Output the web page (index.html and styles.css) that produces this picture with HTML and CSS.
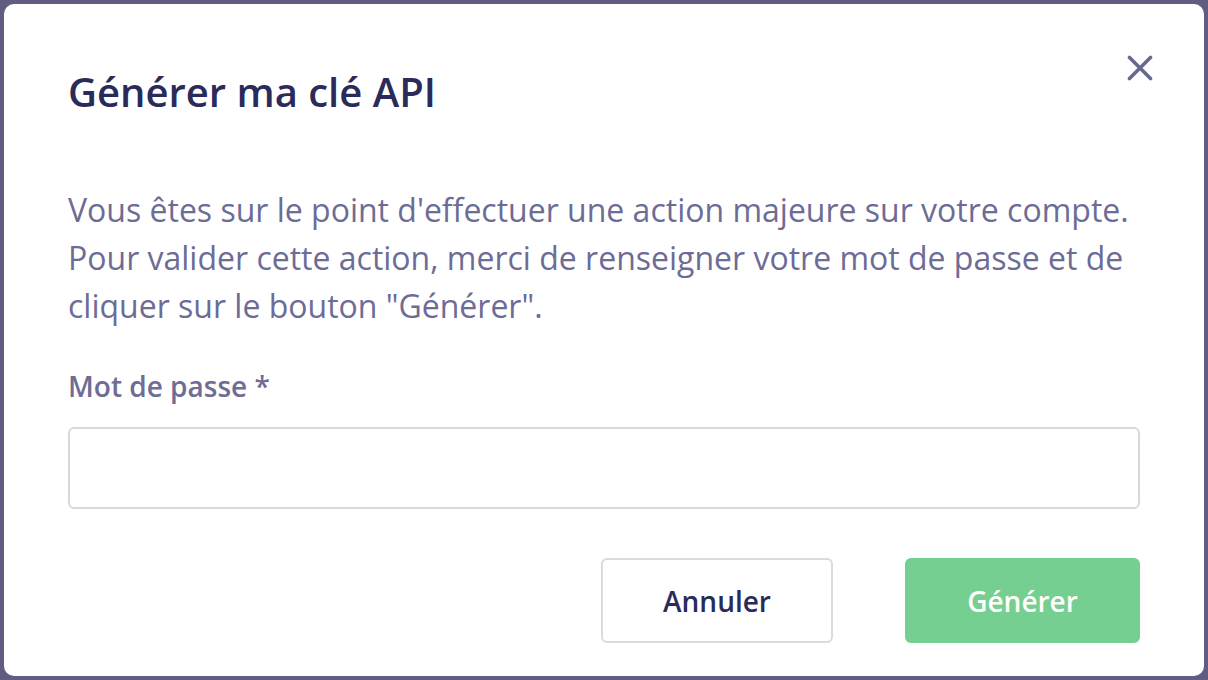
FILE: index.html
```html
<!DOCTYPE html>
<html lang="fr">
<head>
<meta charset="utf-8">
<title>Générer ma clé API</title>
<link rel="stylesheet" href="styles.css">
</head>
<body>
<div class="overlay">
  <div class="modal" role="dialog" aria-labelledby="modal-title">
    <div class="modal-header">
      <h1 id="modal-title" class="modal-title">Générer ma clé API</h1>
      <button class="close-btn" type="button" aria-label="Fermer">
        <svg width="26" height="26" viewBox="0 0 26 26" aria-hidden="true">
          <path d="M2.5 2.5 L23.5 23.5 M23.5 2.5 L2.5 23.5" stroke="currentColor" stroke-width="3.6" stroke-linecap="round" fill="none"/>
        </svg>
      </button>
    </div>
    <p class="modal-text">Vous êtes sur le point d'effectuer une action majeure sur votre compte. Pour valider cette action, merci de renseigner votre mot de passe et de cliquer sur le bouton "Générer".</p>
    <label class="field-label" for="password">Mot de passe *</label>
    <input class="field-input" id="password" type="password">
    <div class="modal-actions">
      <button class="btn btn-secondary" type="button">Annuler</button>
      <button class="btn btn-primary" type="button">Générer</button>
    </div>
  </div>
</div>
</body>
</html>
```

FILE: styles.css
```css
* {
  box-sizing: border-box;
}

html, body {
  margin: 0;
  padding: 0;
  height: 100%;
}

body {
  background: #5f5d81;
  font-family: "Open Sans", "Noto Sans", sans-serif;
}

.overlay {
  padding: 4px;
  height: 100%;
}

.modal {
  background: #ffffff;
  border-radius: 10px;
  height: 672px;
  padding: 48px 64px 33px 64px;
  display: flex;
  flex-direction: column;
}

.modal-header {
  display: flex;
  justify-content: space-between;
  align-items: flex-start;
}

.modal-title {
  margin: 15.5px 0 0 0;
  font-size: 40px;
  line-height: 48px;
  font-weight: 600;
  color: #2a2b5a;
}

.close-btn {
  width: 32px;
  height: 32px;
  margin-right: -16px;
  padding: 0;
  border: none;
  background: transparent;
  color: #67678f;
  display: flex;
  align-items: center;
  justify-content: center;
  cursor: pointer;
}

.modal-text {
  margin: 70px 0 0 0;
  font-size: 32px;
  line-height: 48px;
  font-weight: 400;
  color: #6c6c96;
}

.field-label {
  display: block;
  margin-top: 36.5px;
  font-size: 28px;
  line-height: 40px;
  font-weight: 600;
  color: #6e6d95;
}

.field-input {
  display: block;
  width: 100%;
  height: 82px;
  margin-top: 21px;
  border: 2px solid #d6d9e0;
  border-radius: 6px;
  background: #ffffff;
  font-family: inherit;
  font-size: 28px;
  padding: 0 20px;
  outline: none;
}

.modal-actions {
  margin-top: 49px;
  display: flex;
  justify-content: flex-end;
  gap: 72px;
}

.btn {
  height: 85px;
  border-radius: 6px;
  font-family: inherit;
  font-size: 28px;
  font-weight: 600;
  cursor: pointer;
}

.btn-secondary {
  width: 232px;
  background: #ffffff;
  border: 2px solid #d8dbe2;
  color: #2a2b5a;
}

.btn-primary {
  width: 235px;
  background: #74cf91;
  border: none;
  color: #ffffff;
}
```
